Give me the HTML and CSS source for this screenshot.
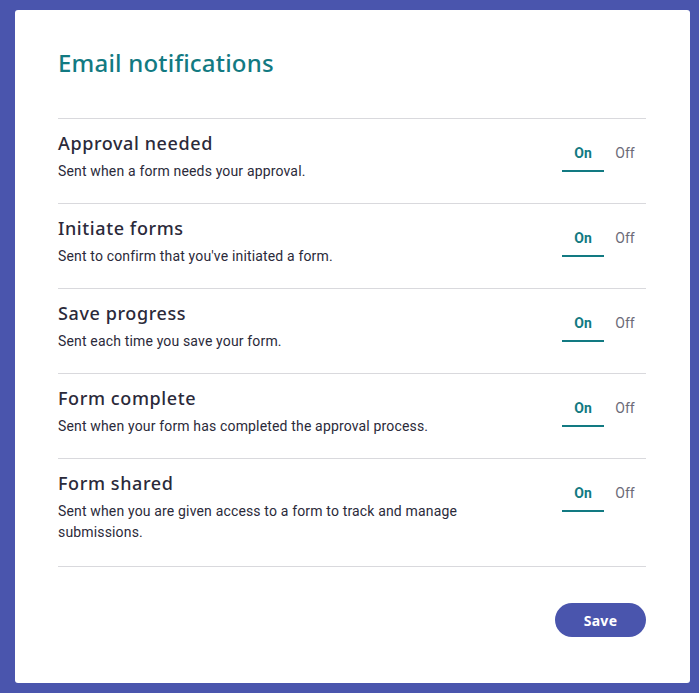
FILE: index.html
```html
<!DOCTYPE html>
<html>
<head>
<meta charset="utf-8">
<link rel="stylesheet" href="styles.css">
</head>
<body>
<div class="card">
  <h1 class="title">Email notifications</h1>
  <div class="list">
    <div class="row">
      <div class="info">
        <div class="name">Approval needed</div>
        <div class="desc">Sent when a form needs your approval.</div>
      </div>
      <div class="toggle"><span class="opt active">On</span><span class="opt">Off</span></div>
    </div>
    <div class="row">
      <div class="info">
        <div class="name">Initiate forms</div>
        <div class="desc">Sent to confirm that you've initiated a form.</div>
      </div>
      <div class="toggle"><span class="opt active">On</span><span class="opt">Off</span></div>
    </div>
    <div class="row">
      <div class="info">
        <div class="name">Save progress</div>
        <div class="desc">Sent each time you save your form.</div>
      </div>
      <div class="toggle"><span class="opt active">On</span><span class="opt">Off</span></div>
    </div>
    <div class="row">
      <div class="info">
        <div class="name">Form complete</div>
        <div class="desc">Sent when your form has completed the approval process.</div>
      </div>
      <div class="toggle"><span class="opt active">On</span><span class="opt">Off</span></div>
    </div>
    <div class="row">
      <div class="info">
        <div class="name">Form shared</div>
        <div class="desc">Sent when you are given access to a form to track and manage submissions.</div>
      </div>
      <div class="toggle"><span class="opt active">On</span><span class="opt">Off</span></div>
    </div>
  </div>
  <div class="actions"><button class="save">Save</button></div>
</div>
</body>
</html>
```

FILE: styles.css
```css
html, body { margin: 0; padding: 0; }
body {
  background: #4a55ad;
  width: 699px;
  height: 693px;
  padding: 10px 9px 10px 15px;
  box-sizing: border-box;
  font-family: Roboto, "Liberation Sans", sans-serif;
}
.card {
  background: #fff;
  border-radius: 3px;
  height: 673px;
  box-sizing: border-box;
  padding: 38px 44px 0 43px;
}
.title {
  margin: 0;
  font-family: "Noto Sans", sans-serif;
  font-weight: 500;
  font-size: 24px;
  line-height: 30px;
  color: #127a82;
  letter-spacing: 0.2px;
  height: 70px;
}
.list { border-top: 1px solid #d9d9dd; }
.row {
  display: flex;
  justify-content: space-between;
  align-items: flex-start;
  border-bottom: 1px solid #d9d9dd;
  padding: 12px 0 21px;
}
.info { width: 420px; }
.name {
  font-family: "Noto Sans", sans-serif;
  font-weight: 500;
  font-size: 18px;
  line-height: 24px;
  letter-spacing: 0.6px;
  color: #2b2a3a;
}
.desc {
  margin-top: 6px;
  font-size: 14px;
  line-height: 21px;
  letter-spacing: 0.16px;
  color: #2b2a3a;
}
.toggle { display: flex; margin-top: 6px; }
.opt {
  width: 42px;
  text-align: center;
  font-size: 14px;
  line-height: 18px;
  padding: 7px 0 8px;
  color: #6b6a78;
  border-bottom: 2px solid transparent;
}
.opt.active {
  color: #127a82;
  font-weight: 700;
  border-bottom-color: #127a82;
}
.row:last-child { padding-bottom: 23px; }
.actions {
  display: flex;
  justify-content: flex-end;
  padding-top: 36px;
}
.save {
  width: 91px;
  height: 34px;
  border: none;
  border-radius: 17px;
  background: #4a55ad;
  color: #fff;
  font-family: "Noto Sans", sans-serif;
  font-weight: 700;
  font-size: 14px;
  letter-spacing: 0.3px;
}
```
